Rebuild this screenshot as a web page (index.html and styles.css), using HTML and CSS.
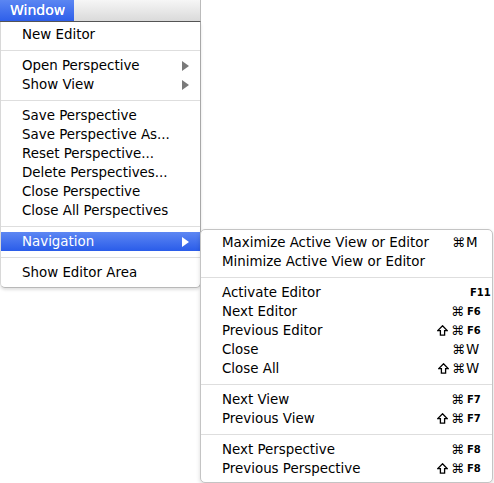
FILE: index.html
```html
<!DOCTYPE html>
<html>
<head>
<meta charset="utf-8">
<link rel="stylesheet" href="styles.css">
</head>
<body>
<div class="screen">
  <div class="menubar">
    <span class="title active">Window</span>
  </div>
  <div class="menu main">
    <div class="item"><span class="label">New Editor</span></div>
    <div class="sep"></div>
    <div class="item"><span class="label">Open Perspective</span><span class="arrow"></span></div>
    <div class="item"><span class="label">Show View</span><span class="arrow"></span></div>
    <div class="sep"></div>
    <div class="item"><span class="label">Save Perspective</span></div>
    <div class="item"><span class="label">Save Perspective As...</span></div>
    <div class="item"><span class="label">Reset Perspective...</span></div>
    <div class="item"><span class="label">Delete Perspectives...</span></div>
    <div class="item"><span class="label">Close Perspective</span></div>
    <div class="item"><span class="label">Close All Perspectives</span></div>
    <div class="sep"></div>
    <div class="item selected has-sub"><span class="label">Navigation</span><span class="arrow"></span>
      <div class="menu sub">
        <div class="item"><span class="label">Maximize Active View or Editor</span><span class="keys"><span class="mod">⌘</span><span class="key">M</span></span></div>
        <div class="item"><span class="label">Minimize Active View or Editor</span></div>
        <div class="sep"></div>
        <div class="item"><span class="label">Activate Editor</span><span class="keys"><span class="mod"></span><span class="key fkey wide">F11</span></span></div>
        <div class="item"><span class="label">Next Editor</span><span class="keys"><span class="mod">⌘</span><span class="key fkey">F6</span></span></div>
        <div class="item"><span class="label">Previous Editor</span><span class="keys"><span class="mod"><svg class="shift" viewBox="0 0 11 11"><path d="M5.5 0.8 L10.2 5.6 H7.6 V10.2 H3.4 V5.6 H0.8 Z"/></svg>⌘</span><span class="key fkey">F6</span></span></div>
        <div class="item"><span class="label">Close</span><span class="keys"><span class="mod">⌘</span><span class="key">W</span></span></div>
        <div class="item"><span class="label">Close All</span><span class="keys"><span class="mod"><svg class="shift" viewBox="0 0 11 11"><path d="M5.5 0.8 L10.2 5.6 H7.6 V10.2 H3.4 V5.6 H0.8 Z"/></svg>⌘</span><span class="key">W</span></span></div>
        <div class="sep"></div>
        <div class="item"><span class="label">Next View</span><span class="keys"><span class="mod">⌘</span><span class="key fkey">F7</span></span></div>
        <div class="item"><span class="label">Previous View</span><span class="keys"><span class="mod"><svg class="shift" viewBox="0 0 11 11"><path d="M5.5 0.8 L10.2 5.6 H7.6 V10.2 H3.4 V5.6 H0.8 Z"/></svg>⌘</span><span class="key fkey">F7</span></span></div>
        <div class="sep"></div>
        <div class="item"><span class="label">Next Perspective</span><span class="keys"><span class="mod">⌘</span><span class="key fkey">F8</span></span></div>
        <div class="item"><span class="label">Previous Perspective</span><span class="keys"><span class="mod"><svg class="shift" viewBox="0 0 11 11"><path d="M5.5 0.8 L10.2 5.6 H7.6 V10.2 H3.4 V5.6 H0.8 Z"/></svg>⌘</span><span class="key fkey">F8</span></span></div>
      </div>
    </div>
    <div class="sep"></div>
    <div class="item"><span class="label">Show Editor Area</span></div>
  </div>
</div>
</body>
</html>
```

FILE: styles.css
```css
html, body {
  margin: 0;
  padding: 0;
  background: #ffffff;
}
body {
  font-family: "DejaVu Sans", "Liberation Sans", sans-serif;
  font-size: 13.4px;
  color: #000;
}
.screen {
  width: 494px;
  height: 483px;
  position: relative;
}
.menubar {
  width: 200px;
  height: 21px;
  background: linear-gradient(#f6f6f6, #dadada);
  border-bottom: 1px solid #555;
  border-right: 1px solid #bbb;
  display: flex;
}
.title {
  height: 21px;
  line-height: 21px;
  padding: 0 9px 0 10px;
  font-size: 14px;
  color: #000;
}
.title.active {
  background: linear-gradient(#5b86f2, #2e5fea);
  color: #fff;
  text-shadow: 0 0 0.4px #fff;
}
.menu {
  background: #fff;
  box-sizing: border-box;
}
.main {
  width: 201px;
  padding: 3px 0 5px;
  border-left: 1px solid #d8d8d8;
  border-right: 1px solid #a8a8a8;
  border-bottom: 1px solid #b8b8b8;
  border-radius: 0 0 5px 5px;
  box-shadow: 0 2px 3px rgba(0,0,0,0.12);
}
.item {
  height: 19px;
  line-height: 19px;
  display: flex;
  align-items: center;
  padding: 0 11px 0 21px;
  position: relative;
  white-space: nowrap;
}
.label {
  flex: 1;
}
.arrow {
  width: 0;
  height: 0;
  border-top: 5px solid transparent;
  border-bottom: 5px solid transparent;
  border-left: 7px solid #7a7a7a;
}
.selected {
  background: linear-gradient(#5d87f3, #2a5ce9);
  color: #fff;
}
.selected > .arrow {
  border-left-color: #fff;
}
.sep {
  height: 12px;
  display: flex;
  align-items: center;
}
.sep::before {
  content: "";
  flex: 1;
  height: 1px;
  background: #dedede;
}
.sub {
  position: absolute;
  left: 199px;
  top: -3px;
  width: 293px;
  padding: 3px 0 4px;
  color: #000;
  border: 1px solid #c4c4c4;
  border-radius: 5px;
  box-shadow: 0 2px 4px rgba(0,0,0,0.15);
}
.sub .item {
  padding: 0 5px 0 21px;
}
.keys {
  display: flex;
  align-items: center;
  width: 62px;
}
.mod {
  flex: 1;
  display: flex;
  align-items: center;
  justify-content: flex-end;
  gap: 3px;
  font-size: 13px;
  padding-right: 1px;
}
.shift {
  width: 11px;
  height: 11px;
}
.shift path {
  fill: none;
  stroke: #000;
  stroke-width: 1.3;
  stroke-linejoin: miter;
}
.key {
  width: 21px;
  text-align: left;
}
.fkey {
  font-size: 10px;
  font-weight: bold;
  padding-left: 2px;
  width: 20px;
}
.wide {
  padding-left: 6px;
  width: 17px;
}
```
